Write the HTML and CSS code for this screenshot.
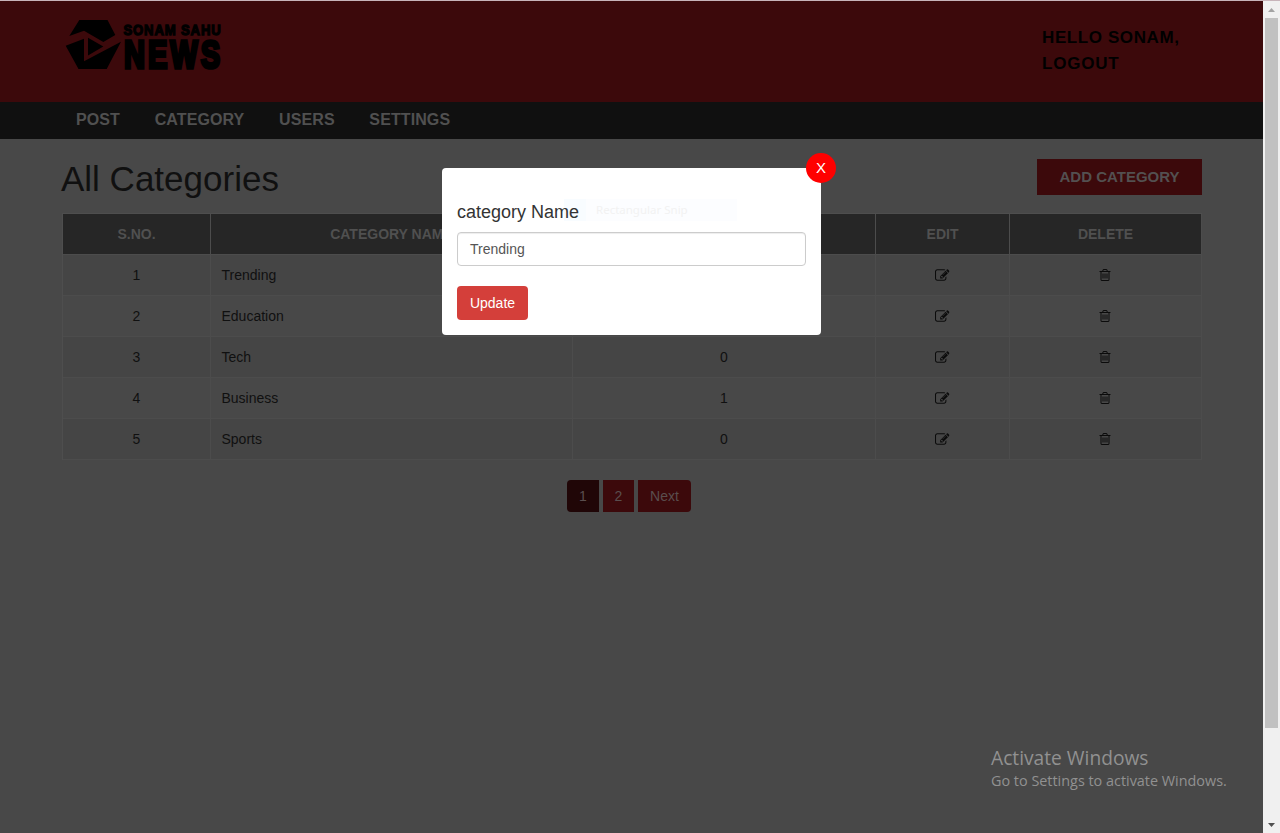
FILE: index.html
```
<!DOCTYPE html>
<html lang="en">
<head>
<meta charset="utf-8">
<title>All Categories</title>
<link rel="stylesheet" href="styles.css">
</head>
<body>
<svg class="sprite" width="0" height="0">
  <symbol id="edit" viewBox="0 0 1792 1792"><path d="M888 1184l116-116-152-152-116 116v56h96v96h56zm440-720q-16-16-33 1l-350 350q-17 17-1 33t33-1l350-350q17-17 1-33zm80 594v190q0 119-84.5 203.5t-203.5 84.5h-832q-119 0-203.5-84.5t-84.5-203.5v-832q0-119 84.5-203.5t203.5-84.5h832q63 0 117 25 15 7 18 23 3 17-9 29l-49 49q-14 14-32 8-23-6-45-6h-832q-66 0-113 47t-47 113v832q0 66 47 113t113 47h832q66 0 113-47t47-113v-126q0-13 9-22l64-64q15-15 35-7t20 29zm-96-738l288 288-672 672h-288v-288zm444 132l-92 92-288-288 92-92q28-28 68-28t68 28l152 152q28 28 28 68t-28 68z"/></symbol>
  <symbol id="trash" viewBox="0 0 1792 1792"><path d="M704 736v576q0 14-9 23t-23 9h-64q-14 0-23-9t-9-23v-576q0-14 9-23t23-9h64q14 0 23 9t9 23zm256 0v576q0 14-9 23t-23 9h-64q-14 0-23-9t-9-23v-576q0-14 9-23t23-9h64q14 0 23 9t9 23zm256 0v576q0 14-9 23t-23 9h-64q-14 0-23-9t-9-23v-576q0-14 9-23t23-9h64q14 0 23 9t9 23zm128 724v-948h-896v948q0 22 7 40.5t14.5 27 10.5 8.5h832q3 0 10.5-8.5t14.5-27 7-40.5zm-672-1076h448l-48-117q-7-9-17-11h-317q-10 2-17 11zm928 32v64q0 14-9 23t-23 9h-96v948q0 83-47 143.5t-113 60.5h-832q-66 0-113-58.5t-47-141.5v-952h-96q-14 0-23-9t-9-23v-64q0-14 9-23t23-9h309l70-167q15-37 54-63t79-26h320q40 0 79 26t54 63l70 167h309q14 0 23 9t9 23z"/></symbol>
</svg>
<div class="window">
  <div class="page">
    <header class="header">
      <svg class="logo" width="160" height="60" viewBox="0 0 160 60">
        <path d="M14.300 2H42.500L50.300 17L38.300 24L19 12.700L4.300 18ZM.7 27.700L19 20.700V43.300L56 23.700L41.700 51H13.500ZM23 19.700L38.300 28.500L23 37.500Z"/>
        <text class="logo-small" x="58.500" y="16.500" textLength="98" lengthAdjust="spacingAndGlyphs">SONAM SAHU</text>
        <text class="logo-big" x="59" y="49.500" textLength="99" lengthAdjust="spacingAndGlyphs">NEWS</text>
      </svg>
      <div class="user"><span>HELLO SONAM,</span><span class="logout">LOGOUT</span></div>
    </header>
    <nav class="nav"><a>POST</a><a>CATEGORY</a><a>USERS</a><a>SETTINGS</a></nav>
    <main class="content">
      <div class="title-row"><h1>All Categories</h1><a class="add">ADD CATEGORY</a></div>
      <div class="table">
        <div class="row head"><b>S.NO.</b><b>CATEGORY NAME</b><b>NO. OF POSTS</b><b>EDIT</b><b>DELETE</b></div>
        <div class="row odd"><span>1</span><span class="name">Trending</span><span>1</span><span><svg class="icon"><use href="#edit"/></svg></span><span><svg class="icon trash"><use href="#trash"/></svg></span></div>
        <div class="row"><span>2</span><span class="name">Education</span><span>0</span><span><svg class="icon"><use href="#edit"/></svg></span><span><svg class="icon trash"><use href="#trash"/></svg></span></div>
        <div class="row odd"><span>3</span><span class="name">Tech</span><span>0</span><span><svg class="icon"><use href="#edit"/></svg></span><span><svg class="icon trash"><use href="#trash"/></svg></span></div>
        <div class="row"><span>4</span><span class="name">Business</span><span>1</span><span><svg class="icon"><use href="#edit"/></svg></span><span><svg class="icon trash"><use href="#trash"/></svg></span></div>
        <div class="row odd"><span>5</span><span class="name">Sports</span><span>0</span><span><svg class="icon"><use href="#edit"/></svg></span><span><svg class="icon trash"><use href="#trash"/></svg></span></div>
      </div>
      <div class="pager"><a class="current">1</a><a class="two">2</a><a class="next">Next</a></div>
    </main>
  </div>
  <div class="scrollbar">
    <svg width="17" height="17"><path d="M5 11h7l-3.500-4z" fill="#a3a3a3"/></svg>
    <div class="thumb"></div>
    <svg class="down" width="17" height="17"><path d="M5 7h7l-3.500 4z" fill="#505050"/></svg>
  </div>
</div>
<div class="modal">
  <div class="close">X</div>
  <div class="snip"><span>Rectangular Snip</span></div>
  <label>category Name</label>
  <div class="field">Trending</div>
  <div class="update">Update</div>
</div>
<div class="watermark"><div class="wm-title">Activate Windows</div><div class="wm-sub">Go to Settings to activate Windows.</div></div>
</body>
</html>
```
FILE: styles.css
```
* { box-sizing: border-box; }
body { margin: 0; height: 833px; overflow: hidden; font: 14px/20px "Liberation Sans", Arial, sans-serif; color: #101010; background: #484848; }
.sprite { position: absolute; }
.window { display: flex; height: 833px; border-top: 1px solid #c8b4ba; }
.page { flex: 1; }
.header { height: 101px; background: #3c090b; padding: 17px 61px 0 65px; display: flex; justify-content: space-between; }
.logo { display: block; fill: #000; overflow: visible; }
.logo-small { font: bold 15.500px "Liberation Sans", Arial, sans-serif; stroke: #000; stroke-width: 1.300px; letter-spacing: 1px; }
.logo-big { font: bold 38.500px "Liberation Sans", Arial, sans-serif; stroke: #000; stroke-width: 3.500px; letter-spacing: 4px; }
.user { display: flex; flex-direction: column; width: 160px; padding-top: 7px; font: bold 17px/26px "Liberation Sans", Arial, sans-serif; letter-spacing: .6px; color: #000; white-space: nowrap; }
.logout { letter-spacing: .8px; }
.nav { height: 37px; background: #101010; padding: 7px 0 0 76px; display: flex; gap: 34.700px; font-size: 16px; line-height: 22px; font-weight: bold; color: #505050; letter-spacing: .1px; }
.content { padding: 20px 61px 0 62px; }
.title-row { display: flex; justify-content: space-between; align-items: flex-start; height: 54px; }
h1 { margin: 0 0 0 -1px; font-size: 35px; line-height: 39px; font-weight: normal; }
.add { width: 165px; height: 36px; background: #3c090b; color: #535050; font-weight: bold; font-size: 15px; line-height: 36px; text-align: center; }
.table { border: solid #4e4e4e; border-width: 1px 0 0 1px; }
.row { display: grid; grid-template-columns: 148px 362px 303px 134px 192px; height: 41px; text-align: center; line-height: 40px; }
.row > * { border: solid #4c4c4c; border-width: 0 1px 1px 0; }
.row .name { text-align: left; padding-left: 10.500px; }
.odd { background: #454545; }
.head { background: #262626; color: #505050; }
.icon { width: 14.500px; height: 15px; fill: #0b0b0b; vertical-align: -3px; }
.trash { width: 14px; height: 14px; margin-right: 1px; vertical-align: -2px; }
.pager { display: flex; gap: 4px; padding: 20px 0 0 505px; color: #5a4e4e; line-height: 32px; text-align: center; }
.pager a { height: 32px; background: #3c090b; }
.pager .current { width: 32px; background: #200607; border-radius: 4px 0 0 4px; }
.pager .two { width: 31px; }
.pager .next { width: 53px; border-radius: 0 4px 4px 0; }
.scrollbar { width: 17px; background: #f0f0f0; display: flex; flex-direction: column; }
.scrollbar svg { flex: none; display: block; }
.thumb { height: 710px; margin: 0 2px; background: #c1c1c1; }
.down { margin-top: auto; }
.modal { position: absolute; left: 442px; top: 168px; width: 379px; height: 167px; padding: 32px 15px 15px; background: #fff; border-radius: 4px; }
.close { position: absolute; right: -15px; top: -15px; width: 30px; height: 30px; border-radius: 50%; background: #f00; color: #fff; font-size: 15px; line-height: 30px; text-align: center; }
.modal label { position: relative; display: block; font-size: 18px; line-height: 24px; color: #333; }
.snip { position: absolute; left: 122px; top: 31px; width: 173px; height: 22px; background: #fcfdff; border-left: 22px solid #f8fcff; padding-left: 10px; font: 11.500px/22px "Noto Sans", sans-serif; color: #f2f2f2; }
.field { margin-top: 8px; height: 34px; border: 1px solid #ccc; border-radius: 4px; padding: 6px 12px; color: #555; box-shadow: inset 0 1px 1px rgba(0,0,0,.075); }
.update { margin-top: 20px; width: 71px; height: 34px; border-radius: 4px; background: #d43f3a; color: #fff; line-height: 34px; text-align: center; }
.watermark { position: absolute; left: 991px; top: 745px; color: #919191; white-space: nowrap; font-family: "Open Sans", "Noto Sans", sans-serif; }
.wm-title { font-size: 19.200px; line-height: 26px; }
.wm-sub { font-size: 14.400px; line-height: 20px; }
```
